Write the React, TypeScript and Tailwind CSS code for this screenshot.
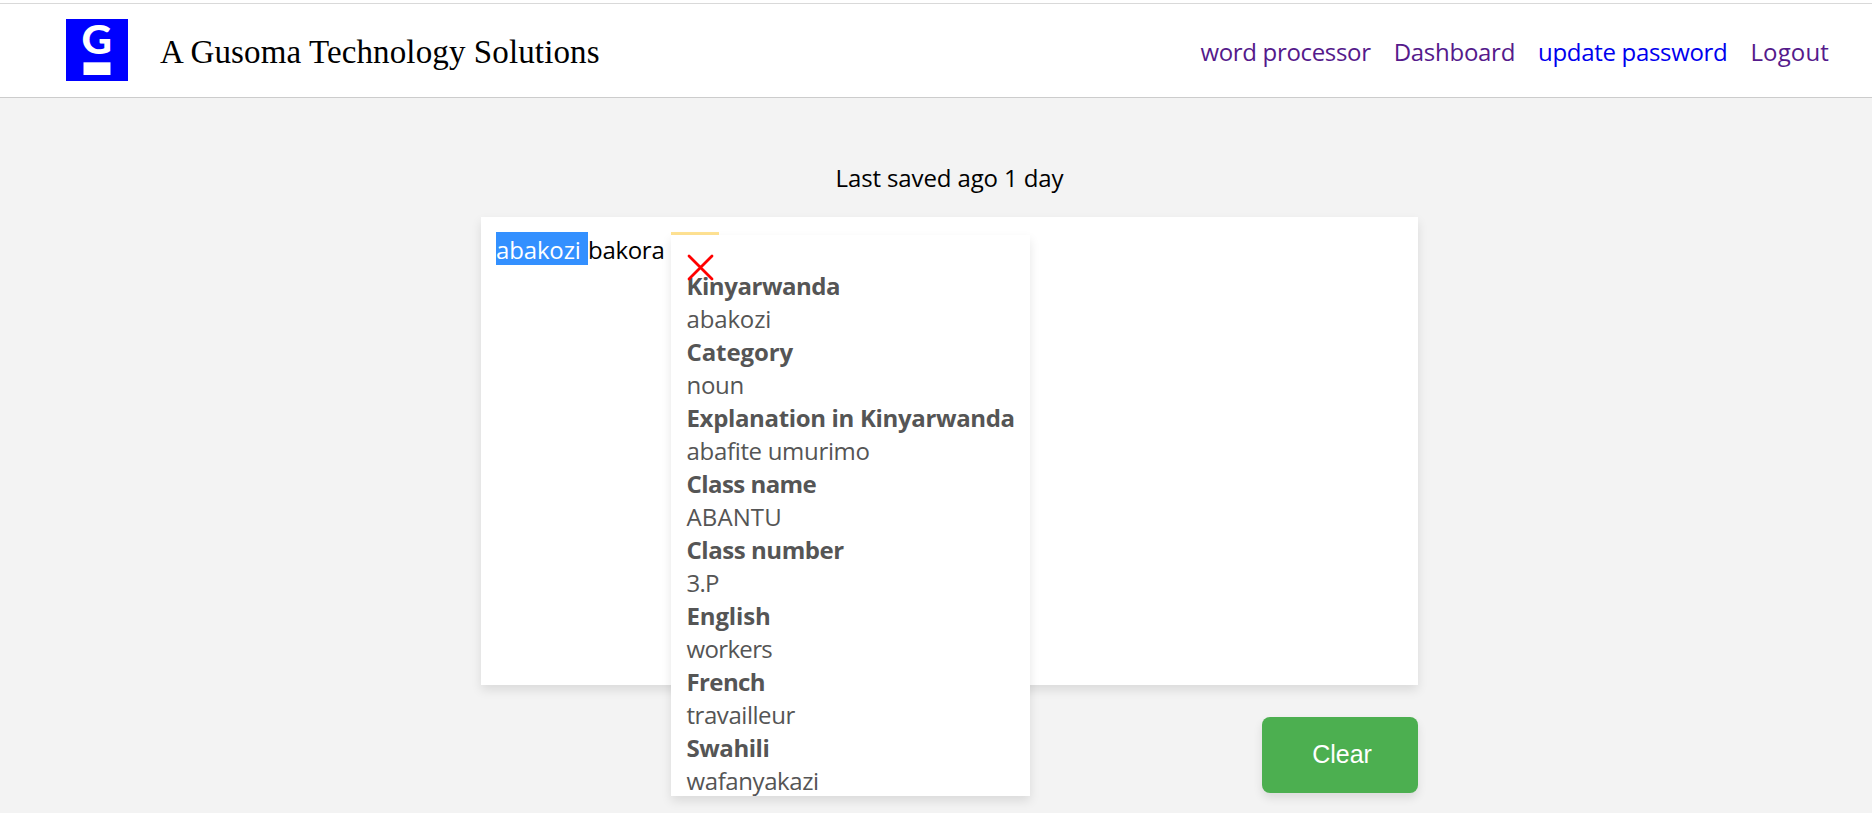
type Entry = { label: string; value: string; labelClass: string; valueClass: string };

const entries: Entry[] = [
  { label: 'Kinyarwanda', value: 'abakozi', labelClass: 'tracking-[-0.45px]', valueClass: 'tracking-[-0.15px]' },
  { label: 'Category', value: 'noun', labelClass: 'tracking-[-0.1px]', valueClass: 'tracking-[-0.3px]' },
  { label: 'Explanation in Kinyarwanda', value: 'abafite umurimo', labelClass: 'tracking-[-0.34px]', valueClass: 'tracking-[-0.32px]' },
  { label: 'Class name', value: 'ABANTU', labelClass: 'tracking-[-0.55px]', valueClass: 'tracking-[0.1px]' },
  { label: 'Class number', value: '3.P', labelClass: 'tracking-[-0.45px]', valueClass: 'tracking-[-0.8px]' },
  { label: 'English', value: 'workers', labelClass: 'tracking-[-0.15px]', valueClass: 'tracking-[-0.65px]' },
  { label: 'French', value: 'travailleur', labelClass: 'tracking-[-0.6px]', valueClass: 'tracking-[-0.45px]' },
  { label: 'Swahili', value: 'wafanyakazi', labelClass: 'tracking-[-0.45px]', valueClass: 'tracking-[-0.4px]' },
];

function Logo() {
  return (
    <svg className="block h-[62px] w-[62px] overflow-visible" viewBox="0 0 62 62">
      <rect width="62" height="62" fill="#0000ff" />
      <text x="15.5" y="34.9" textLength="30.5" lengthAdjust="spacingAndGlyphs" fill="#fff" className="font-['Lato',sans-serif] text-[39.5px] font-black">
        G
      </text>
      <rect x="17.5" y="43.3" width="27" height="12.7" fill="#fff" />
    </svg>
  );
}

export default function App() {
  return (
    <div className="flex h-[813px] flex-col overflow-hidden bg-[#f3f3f3] font-['Open_Sans','Noto_Sans',sans-serif] text-[24px] leading-[33px] font-normal text-black">
      <header className="flex h-[98px] shrink-0 flex-col border-b border-[#cccccc] bg-white">
        <div className="mt-[3px] h-px shrink-0 bg-[#d9d9d9]" />
        <div className="flex flex-1 items-start justify-between pt-[15px] pr-[43px] pl-[66px]">
          <div className="flex items-start gap-8">
            <Logo />
            <h1 className="mt-[14px] font-['Liberation_Serif',serif] text-[33px] leading-[38px] font-normal tracking-[0.12px] whitespace-nowrap">
              A Gusoma Technology Solutions
            </h1>
          </div>
          <nav className="mt-[16px] flex gap-[23px] whitespace-nowrap text-[#551a8b]">
            <a className="tracking-[-0.33px]">word processor</a>
            <a className="tracking-[-0.27px]">Dashboard</a>
            <a className="tracking-[-0.32px] text-[#0000ee]">update password</a>
            <a className="tracking-[0.15px]">Logout</a>
          </nav>
        </div>
      </header>
      <main className="ml-[481px] flex w-[937px] flex-1 flex-col pt-[63px]">
        <p className="text-center tracking-[-0.12px] whitespace-nowrap">Last saved ago 1 day</p>
        <section className="mt-[23px] h-[468px] shrink-0 bg-white px-[15px] pt-[15px] shadow-[0_5px_10px_rgba(0,0,0,0.1)]">
          <div className="flex items-start">
            <span className="h-[33px] w-[92px] bg-[#3390ff] pt-px tracking-[-0.15px] text-white">abakozi</span>
            <span className="w-[83px] pt-px tracking-[-0.3px]">bakora</span>
            <div className="relative h-[3px] w-[48px] bg-[#ffe293]">
              <div className="absolute top-[3px] left-0 h-[561px] w-[359px] bg-white px-[15.5px] pt-[34px] text-[#555555] shadow-[0_5px_10px_rgba(0,0,0,0.1)]">
                {entries.map((e) => (
                  <dl key={e.label} className="whitespace-nowrap">
                    <dt className={`font-bold ${e.labelClass}`}>{e.label}</dt>
                    <dd className={e.valueClass}>{e.value}</dd>
                  </dl>
                ))}
                <svg className="absolute top-[19px] left-[16px] h-[27px] w-[27px]" viewBox="0 0 27 27">
                  <path d="M2 2 L25 25 M25 2 L2 25" stroke="#ff0000" strokeWidth="2.8" strokeLinecap="round" />
                </svg>
              </div>
            </div>
          </div>
        </section>
        <button className="mt-[32px] h-[76px] w-[156px] self-end rounded-[8px] bg-[#4caf50] pb-[2px] pl-[4px] font-['Liberation_Sans',Arial,sans-serif] text-[25px] font-normal text-white shadow-[0_5px_10px_rgba(0,0,0,0.1)]">
          Clear
        </button>
      </main>
    </div>
  );
}
